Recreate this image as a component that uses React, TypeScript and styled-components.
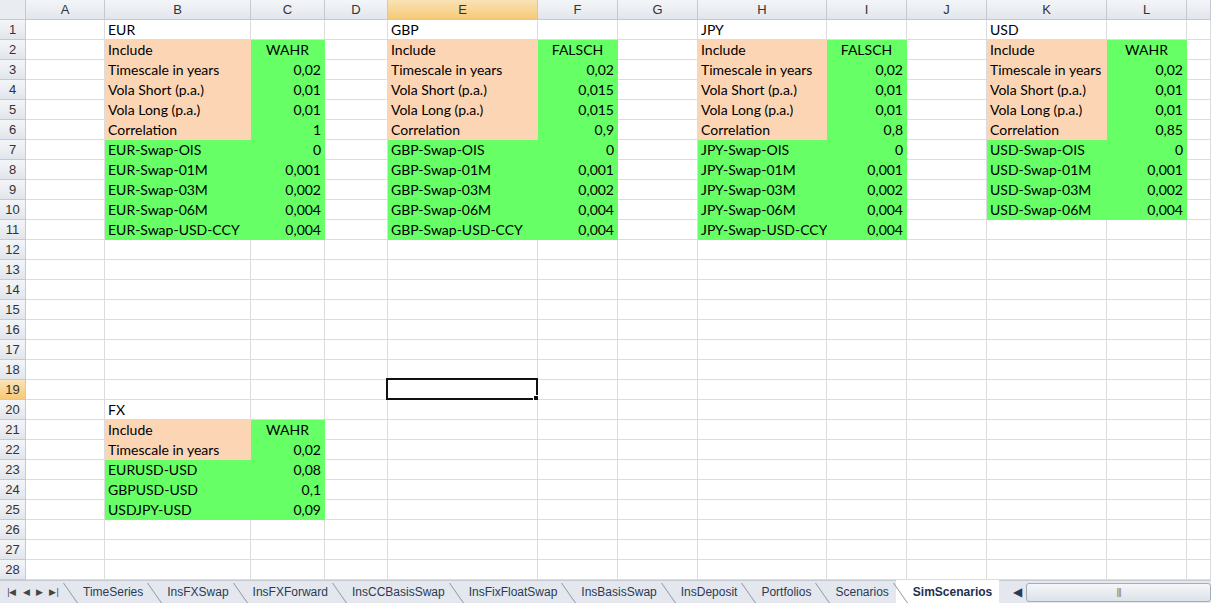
import React from "react";
import styled, { createGlobalStyle } from "styled-components";

const Global = createGlobalStyle`
  html, body { margin: 0; padding: 0; background: #fff; overflow: hidden; }
  body { font-family: Lato, "Open Sans", "Liberation Sans", sans-serif; }
`;

const COLS = ["A","B","C","D","E","F","G","H","I","J","K","L","M"];
const WIDTHS = [26,79,146,74,63,150,80,80,129,80,80,120,80,24];
const PEACH = "#FCD5B4";
const GREEN = "#66FF66";

type Cell = { v: string; bg?: string; right?: boolean; center?: boolean };
const cells: Record<string, Cell> = {};
function block(labelCol: string, valCol: string, title: string, inc: string, corr: string | null, items: [string,string][], startRow: number, withVola: boolean) {
  cells[labelCol + startRow] = { v: title };
  let r = startRow + 1;
  cells[labelCol + r] = { v: "Include", bg: PEACH };
  cells[valCol + r] = { v: inc, bg: GREEN, center: true }; r++;
  cells[labelCol + r] = { v: "Timescale in years", bg: PEACH };
  cells[valCol + r] = { v: "0,02", bg: GREEN, right: true }; r++;
  if (withVola) {
    const vs = title === "GBP" ? "0,015" : "0,01";
    cells[labelCol + r] = { v: "Vola Short (p.a.)", bg: PEACH };
    cells[valCol + r] = { v: vs, bg: GREEN, right: true }; r++;
    cells[labelCol + r] = { v: "Vola Long (p.a.)", bg: PEACH };
    cells[valCol + r] = { v: vs, bg: GREEN, right: true }; r++;
    cells[labelCol + r] = { v: "Correlation", bg: PEACH };
    cells[valCol + r] = { v: corr || "", bg: GREEN, right: true }; r++;
  }
  for (const [a, b] of items) {
    cells[labelCol + r] = { v: a, bg: GREEN };
    cells[valCol + r] = { v: b, bg: GREEN, right: true }; r++;
  }
}
const sw = (c: string, ccy: boolean): [string,string][] => {
  const l: [string,string][] = [[`${c}-Swap-OIS`,"0"],[`${c}-Swap-01M`,"0,001"],[`${c}-Swap-03M`,"0,002"],[`${c}-Swap-06M`,"0,004"]];
  if (ccy) l.push([`${c}-Swap-USD-CCY`,"0,004"]);
  return l;
};
block("B","C","EUR","WAHR","1",sw("EUR",true),1,true);
block("E","F","GBP","FALSCH","0,9",sw("GBP",true),1,true);
block("H","I","JPY","FALSCH","0,8",sw("JPY",true),1,true);
block("K","L","USD","WAHR","0,85",sw("USD",false),1,true);
block("B","C","FX","WAHR",null,[["EURUSD-USD","0,08"],["GBPUSD-USD","0,1"],["USDJPY-USD","0,09"]],20,false);

const Page = styled.div`
  width: 1211px; height: 603px; display: flex; flex-direction: column; overflow: hidden;
`;
const Sheet = styled.div`
  display: grid;
  grid-template-columns: ${WIDTHS.map(w => w + "px").join(" ")};
  grid-auto-rows: 20px;
  height: 580px;
  overflow: hidden;
`;
const Head = styled.div<{ $sel?: boolean }>`
  box-sizing: border-box;
  background: ${p => p.$sel ? "linear-gradient(#F9E3B5,#F6C977)" : "linear-gradient(#F3F5F8,#E2E6EC)"};
  border-right: 1px solid #C5CAD2;
  border-bottom: 1px solid #C5CAD2;
  font-size: 13px; color: #333;
  display: flex; align-items: center;
  justify-content: center;
  font-family: "Liberation Sans", Arial, sans-serif;
`;
const Corner = styled(Head)`
  background: #E9ECF0;
`;
const C = styled.div<{ $bg?: string; $align: string }>`
  box-sizing: border-box;
  position: relative;
  background: ${p => p.$bg || "#fff"};
  border-right: 1px solid ${p => p.$bg || "#DADCDD"};
  border-bottom: 1px solid ${p => p.$bg || "#DADCDD"};
  font-size: 14px; color: #000;
  display: flex; align-items: center; justify-content: ${p => p.$align};
  padding: 0 3px;
  white-space: nowrap; overflow: visible;
`;
const Sel = styled.div`
  position: absolute; left: -2px; top: -2px; right: -1px; bottom: -1px;
  border: 2px solid #111; pointer-events: none;
  &::after { content: ""; position: absolute; right: -4px; bottom: -4px; width: 5px; height: 5px; background: #111; border: 1px solid #fff; }
`;
const TabBar = styled.div`
  height: 23px; background: #E4E8EE; border-top: 1px solid #C5CAD2; box-sizing: border-box;
  display: flex; align-items: stretch; font-family: "Liberation Sans", Arial, sans-serif; font-size: 12px; color: #2a3a55;
`;
const Nav = styled.div`
  width: 66px; display: flex; align-items: center; justify-content: space-around; padding: 0 4px; box-sizing: border-box; color: #444; font-size: 9px;
`;
const Tab = styled.div<{ $active?: boolean }>`
  display: flex; align-items: center; padding: 0 7px 0 17px; position: relative;
  background: ${p => p.$active ? "#fff" : "transparent"};
  font-weight: ${p => p.$active ? "bold" : "normal"};
  color: ${p => p.$active ? "#1F2F4F" : "#2a3a55"};
  margin-top: -1px;
  &::before { content: ""; position: absolute; left: 4px; top: 3px; width: 1px; height: 20px; background: #8C96A4; transform: skewX(35deg); }
`;
const Scroll = styled.div`
  flex: 1; display: flex; align-items: center; gap: 4px; padding-left: 14px;
`;
const ScrollTrack = styled.div`
  flex: 1; height: 17px; border: 1px solid #A5ADB8; border-radius: 3px; background: linear-gradient(#F4F6F8,#DDE2E8);
  display: flex; align-items: center; justify-content: center; color: #777; font-size: 9px; letter-spacing: -1px;
`;

export default function App() {
  const tabs = ["TimeSeries","InsFXSwap","InsFXForward","InsCCBasisSwap","InsFixFloatSwap","InsBasisSwap","InsDeposit","Portfolios","Scenarios","SimScenarios"];
  const items: React.ReactNode[] = [];
  items.push(<Corner key="corner" />);
  COLS.forEach(c => items.push(<Head key={"h" + c} $sel={c === "E"}>{c === "M" ? "" : c}</Head>));
  for (let r = 1; r <= 28; r++) {
    items.push(<Head key={"r" + r} $sel={r === 19}>{r}</Head>);
    COLS.forEach(c => {
      const d = cells[c + r];
      items.push(
        <C key={c + r} $bg={d?.bg} $align={d?.right ? "flex-end" : d?.center ? "center" : "flex-start"}>
          {d?.v}
          {c === "E" && r === 19 && <Sel />}
        </C>
      );
    });
  }
  return (
    <Page>
      <Global />
      <Sheet>{items}</Sheet>
      <TabBar>
        <Nav><span>|◀</span><span>◀</span><span>▶</span><span>▶|</span></Nav>
        {tabs.map(t => <Tab key={t} $active={t === "SimScenarios"}>{t}</Tab>)}
        <Scroll><span>◀</span><ScrollTrack>|||</ScrollTrack></Scroll>
      </TabBar>
    </Page>
  );
}
